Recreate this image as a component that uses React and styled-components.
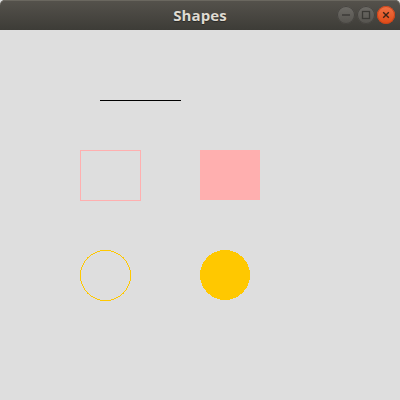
import React from "react";
import styled, { createGlobalStyle } from "styled-components";

const Global = createGlobalStyle`
  html, body {
    margin: 0;
    padding: 0;
    width: 400px;
    height: 400px;
    overflow: hidden;
    background: #dedede;
  }
`;

const Frame = styled.div`
  width: 400px;
  height: 400px;
  display: flex;
  flex-direction: column;
  background: #dedede;
`;

const TitleBar = styled.div`
  height: 30px;
  flex: none;
  display: grid;
  grid-template-columns: 1fr auto 1fr;
  align-items: center;
  background: linear-gradient(#55524c, #3d3c37);
  border-radius: 5px 5px 0 0;
  box-shadow: inset 0 1px 0 #6a675f;
`;

const Title = styled.div`
  grid-column: 2;
  font-family: "Open Sans", "Noto Sans", sans-serif;
  font-weight: 700;
  font-size: 15px;
  color: #dfdbd2;
  letter-spacing: 0.1px;
  text-shadow: 0 1px 1px rgba(0, 0, 0, 0.4);
`;

const Controls = styled.div`
  grid-column: 3;
  justify-self: end;
  display: flex;
  gap: 2px;
  padding-right: 5px;
`;

const WinButton = styled.div`
  width: 18px;
  height: 18px;
  border-radius: 50%;
  display: flex;
  align-items: center;
  justify-content: center;
  background: ${(p) =>
    p.$close
      ? "linear-gradient(#f07346, #df4a16)"
      : "linear-gradient(#6d6b66, #55534e)"};
  box-shadow: inset 0 0 0 1px ${(p) => (p.$close ? "#c8431a" : "#45433f")};
`;

const Canvas = styled.svg`
  display: block;
  flex: 1;
`;

const App = () => {
  const glyph = "#3a3935";
  return (
    <>
      <Global />
      <Frame>
        <TitleBar>
          <Title>Shapes</Title>
          <Controls>
            <WinButton>
              <svg width="10" height="10" viewBox="0 0 10 10">
                <line x1="1" y1="5" x2="9" y2="5" stroke={glyph} strokeWidth="1.4" />
              </svg>
            </WinButton>
            <WinButton>
              <svg width="10" height="10" viewBox="0 0 10 10">
                <rect x="1.5" y="1.5" width="7" height="7" fill="none" stroke={glyph} strokeWidth="1.3" />
              </svg>
            </WinButton>
            <WinButton $close>
              <svg width="10" height="10" viewBox="0 0 10 10">
                <path d="M2.2 2.2 L7.8 7.8 M7.8 2.2 L2.2 7.8" stroke="#3a2418" strokeWidth="1.4" />
              </svg>
            </WinButton>
          </Controls>
        </TitleBar>
        {/* drawing area, coordinates offset by the 30px title bar */}
        <Canvas width="400" height="370" viewBox="0 30 400 370" shapeRendering="crispEdges">
          <line x1="100" y1="100.5" x2="181" y2="100.5" stroke="#000" strokeWidth="1" />
          <rect x="80.5" y="150.5" width="60" height="50" fill="none" stroke="#ffafaf" strokeWidth="1" />
          <rect x="200" y="150" width="60" height="50" fill="#ffafaf" />
          <circle cx="105.5" cy="275.5" r="25" fill="none" stroke="#ffc800" strokeWidth="1" />
          <circle cx="225" cy="275" r="25" fill="#ffc800" />
        </Canvas>
      </Frame>
    </>
  );
};

export default App;
